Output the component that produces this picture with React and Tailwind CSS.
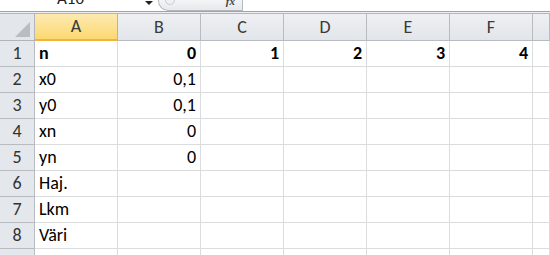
export default function App() {
  const cols = ["A", "B", "C", "D", "E", "F", ""];
  const rows = [
    ["n", "0", "1", "2", "3", "4"],
    ["x0", "0,1"],
    ["y0", "0,1"],
    ["xn", "0"],
    ["yn", "0"],
    ["Haj."],
    ["Lkm"],
    ["Väri"],
    [],
  ];
  const font = { fontFamily: "Carlito, Calibri, 'Liberation Sans', sans-serif" };

  return (
    <div className="w-[550px] h-[255px] overflow-hidden bg-white text-[18px] text-black" style={font}>
      {/* formula bar, cut off at the top */}
      <div className="h-[11px] flex items-end relative bg-white">
        <div className="w-[140px] h-full relative overflow-hidden">
          <span className="absolute left-[57px] bottom-[4px] leading-none text-[17px] text-[#222]">A10</span>
        </div>
        <div className="w-[18px] h-full flex justify-center items-start pt-[1px]">
          <div className="w-0 h-0 border-l-[4px] border-r-[4px] border-t-[4px] border-l-transparent border-r-transparent border-t-[#222]"></div>
        </div>
        <div className="w-[84px] h-[14px] -mt-[3px] self-start rounded-bl-[10px] border-l border-b border-[#b5b8bd] bg-gradient-to-b from-[#f7f8f9] to-[#e6e8eb] relative flex items-end">
          <div className="absolute left-[6px] -top-[2px] w-[10px] h-[10px] rounded-full border border-[#c9ccd0] bg-[#eef0f2]"></div>
          <span className="ml-auto mr-[7px] mb-[3px] italic font-bold text-[11px] leading-none text-[#444]" style={{ fontFamily: "'Liberation Serif', serif" }}>fx</span>
        </div>
        <div className="w-px h-full bg-[#b5b8bd]"></div>
        <div className="flex-1"></div>
      </div>
      <div className="h-px bg-[#9fa3a8]"></div>
      <div className="h-px bg-[#eef0f2]"></div>
      <div className="h-px bg-[#b2b6bb]"></div>

      {/* sheet grid */}
      <div className="grid grid-cols-[35px_repeat(6,83px)_1fr]">
        {/* column headers */}
        <div className="h-[27px] border-r border-b border-[#b1b5ba] bg-[#e3e6ea] relative">
          <div className="absolute right-[4px] bottom-[3px] w-0 h-0" style={{ borderBottom: "15px solid #b9bdc2", borderLeft: "15px solid transparent" }}></div>
        </div>
        {cols.map((c, i) =>
          i === 0 ? (
            <div
              key={c}
              className="h-[27px] border-r border-[#e2b051] border-b-2 border-b-[#f0b43c] bg-gradient-to-b from-[#fdeab0] to-[#fbd86f] flex items-center justify-center text-[#3a3a3a] text-[18px]"
            >
              {c}
            </div>
          ) : (
            <div
              key={i}
              className="h-[27px] border-r border-b border-[#b8bcc1] bg-gradient-to-b from-[#eef0f3] to-[#e2e5e9] flex items-center justify-center text-[#3a3a3a] text-[18px]"
            >
              {c}
            </div>
          )
        )}

        {rows.map((r, ri) => (
          <div key={ri} className="contents">
            <div className="h-[26px] border-r border-b border-[#b8bcc1] bg-[#e4e7eb] flex items-center justify-center text-[#333] text-[18px]">
              {ri < 8 ? ri + 1 : ""}
            </div>
            {cols.map((_, ci) => (
              <div
                key={ci}
                className={`h-[26px] border-r border-b border-[#dadcdd] flex items-center px-[4px] ${
                  ci === 0 ? "justify-start" : "justify-end"
                } ${ri === 0 ? "font-bold" : ""}`}
              >
                {r[ci]}
              </div>
            ))}
          </div>
        ))}
      </div>
    </div>
  );
}
